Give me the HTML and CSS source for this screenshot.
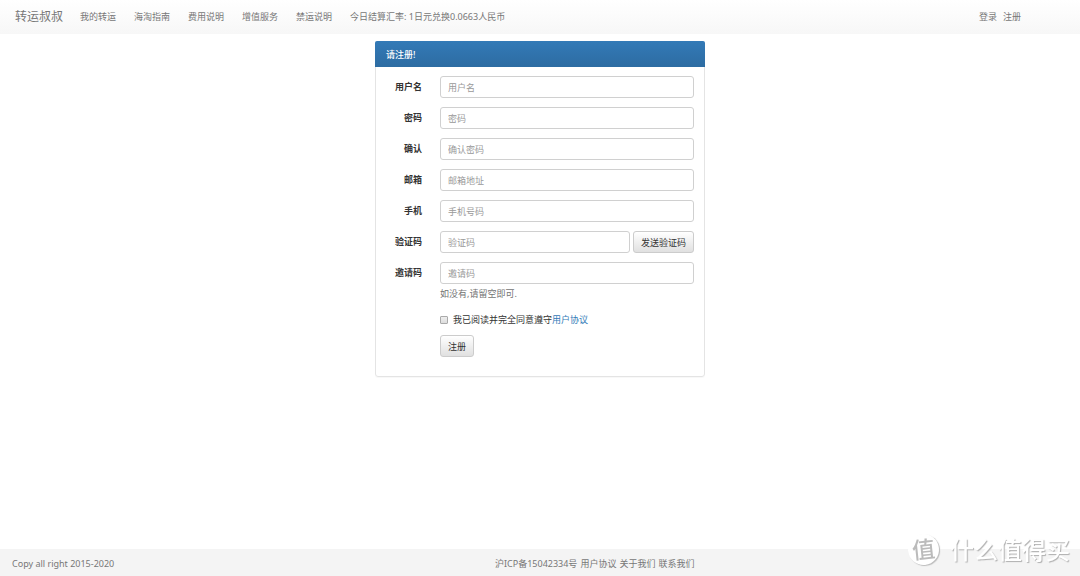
FILE: index.html
```
<!DOCTYPE html>
<html lang="zh-CN">
<head>
<meta charset="utf-8">
<meta name="viewport" content="width=device-width, initial-scale=1">
<title>转运叔叔 - 注册</title>
<link rel="stylesheet" href="styles.css">
</head>
<body>
<header class="navbar">
  <a class="brand" href="#">转运叔叔</a>
  <nav class="nav-links">
    <a href="#">我的转运</a>
    <a href="#">海淘指南</a>
    <a href="#">费用说明</a>
    <a href="#">增值服务</a>
    <a href="#">禁运说明</a>
    <span>今日结算汇率: 1日元兑换0.0663人民币</span>
  </nav>
  <div class="account">
    <a href="#">登录</a>
    <a href="#">注册</a>
  </div>
</header>

<main class="main">
  <section class="panel">
    <h1 class="panel-heading">请注册!</h1>
    <form class="panel-body">
      <div class="row">
        <label class="label" for="username">用户名</label>
        <input class="control" id="username" type="text" placeholder="用户名">
      </div>
      <div class="row">
        <label class="label" for="password">密码</label>
        <input class="control" id="password" type="password" placeholder="密码">
      </div>
      <div class="row">
        <label class="label" for="confirm">确认</label>
        <input class="control" id="confirm" type="password" placeholder="确认密码">
      </div>
      <div class="row">
        <label class="label" for="email">邮箱</label>
        <input class="control" id="email" type="email" placeholder="邮箱地址">
      </div>
      <div class="row">
        <label class="label" for="mobile">手机</label>
        <input class="control" id="mobile" type="tel" placeholder="手机号码">
      </div>
      <div class="row">
        <label class="label" for="code">验证码</label>
        <div class="group">
          <input class="control" id="code" type="text" placeholder="验证码">
          <button class="btn" type="button">发送验证码</button>
        </div>
      </div>
      <div class="row">
        <label class="label" for="invite">邀请码</label>
        <div>
          <input class="control" id="invite" type="text" placeholder="邀请码">
          <p class="help">如没有,请留空即可.</p>
        </div>
      </div>
      <div class="actions">
        <div class="agree">
          <input class="check" id="agree" type="checkbox">
          <label for="agree">我已阅读并完全同意遵守<a href="#">用户协议</a></label>
        </div>
        <button class="btn" type="submit">注册</button>
      </div>
    </form>
  </section>
</main>

<footer class="footer">
  <span>Copy all right 2015-2020</span>
  <nav class="footer-links">
    <span>沪ICP备15042334号</span>
    <a href="#">用户协议</a>
    <a href="#">关于我们</a>
    <a href="#">联系我们</a>
  </nav>
</footer>

<div class="watermark">
  <span class="watermark-badge">值</span>
  <span class="watermark-name">什么值得买</span>
</div>
</body>
</html>
```
FILE: styles.css
```
* {
  box-sizing: border-box;
}

body {
  display: flex;
  flex-direction: column;
  min-height: 100vh;
  margin: 0;
  background: #fff;
  color: #333;
  font-family: "Noto Sans", "Noto Sans CJK SC", sans-serif;
  font-size: 9px;
  line-height: 13px;
}

a {
  color: #337ab7;
  text-decoration: none;
}

.navbar {
  display: flex;
  align-items: center;
  height: 34px;
  padding: 0 59px 1px 15px;
  background: linear-gradient(#fff, #f7f7f7);
  color: #777;
}

.navbar a,
.footer a {
  color: inherit;
}

.brand {
  font-size: 12px;
}

.nav-links {
  display: flex;
  gap: 18px;
  margin-left: 17px;
}

.account {
  display: flex;
  gap: 6px;
  margin-left: auto;
}

.main {
  flex: 1;
  padding: 7px 10px 20px;
}

.panel {
  max-width: 330px;
  margin: 0 auto;
  border: 1px solid #e4e4e4;
  border-radius: 3px;
  box-shadow: 0 1px 1px rgba(0, 0, 0, 0.03);
}

.panel-heading {
  margin: -1px -1px 0;
  padding: 7px 11px 6px;
  border-radius: 2px 2px 0 0;
  background: linear-gradient(#337ab7, #2d6ca2);
  color: #fff;
  font-size: 9px;
  font-weight: 500;
}

.panel-body {
  display: flex;
  flex-direction: column;
  gap: 9px;
  padding: 9px 10px 19px;
}

.row {
  display: grid;
  grid-template-columns: 36px 1fr;
  column-gap: 18px;
}

.label {
  padding-top: 4px;
  font-weight: 700;
  text-align: right;
}

.control {
  display: block;
  width: 100%;
  min-width: 0;
  height: 22px;
  padding: 0 7px;
  border: 1px solid #d0d0d0;
  border-radius: 3px;
  background: #fff;
  color: #555;
  font: inherit;
}

.control::placeholder {
  color: #999;
  opacity: 1;
}

.group {
  display: flex;
  gap: 3px;
}

.btn {
  flex: none;
  height: 22px;
  padding: 0 7px;
  border: 1px solid #ccc;
  border-radius: 3px;
  background: linear-gradient(#fff, #e0e0e0);
  color: #333;
  font: inherit;
}

.help {
  margin: 3px 0 0;
  color: #737373;
}

.actions {
  display: flex;
  flex-direction: column;
  align-items: flex-start;
  gap: 9px;
  padding: 4px 0 0 54px;
}

.agree {
  display: flex;
  align-items: center;
  gap: 5px;
}

.check {
  appearance: none;
  width: 8px;
  height: 8px;
  margin: 0;
  border: 1px solid #aaa;
  border-radius: 1px;
  background: linear-gradient(#eee, #ddd);
}

.check:checked {
  background: #337ab7;
}

.footer {
  display: grid;
  grid-template-columns: 11fr 13fr;
  align-items: center;
  height: 27px;
  padding-top: 2px;
  background: #f4f4f4;
  color: #777;
}

.footer > :first-child {
  padding-left: 12px;
}

.footer-links {
  display: flex;
  gap: 3px;
}

.watermark {
  position: fixed;
  right: 10px;
  bottom: 11px;
  display: flex;
  align-items: center;
  gap: 11px;
  color: #fff;
  font-family: "Noto Sans CJK SC", sans-serif;
  font-weight: 500;
  pointer-events: none;
}

.watermark-badge {
  width: 31px;
  height: 31px;
  border-radius: 50%;
  background: #fff;
  box-shadow: 1px 1px 1px #bbb;
  color: #bbb;
  font-size: 23px;
  line-height: 28px;
  text-align: center;
  transform: rotate(-6deg);
}

.watermark-name {
  font-size: 24px;
  line-height: 32px;
  text-shadow: 1px 1px 1px #b0b0b0;
}
```
